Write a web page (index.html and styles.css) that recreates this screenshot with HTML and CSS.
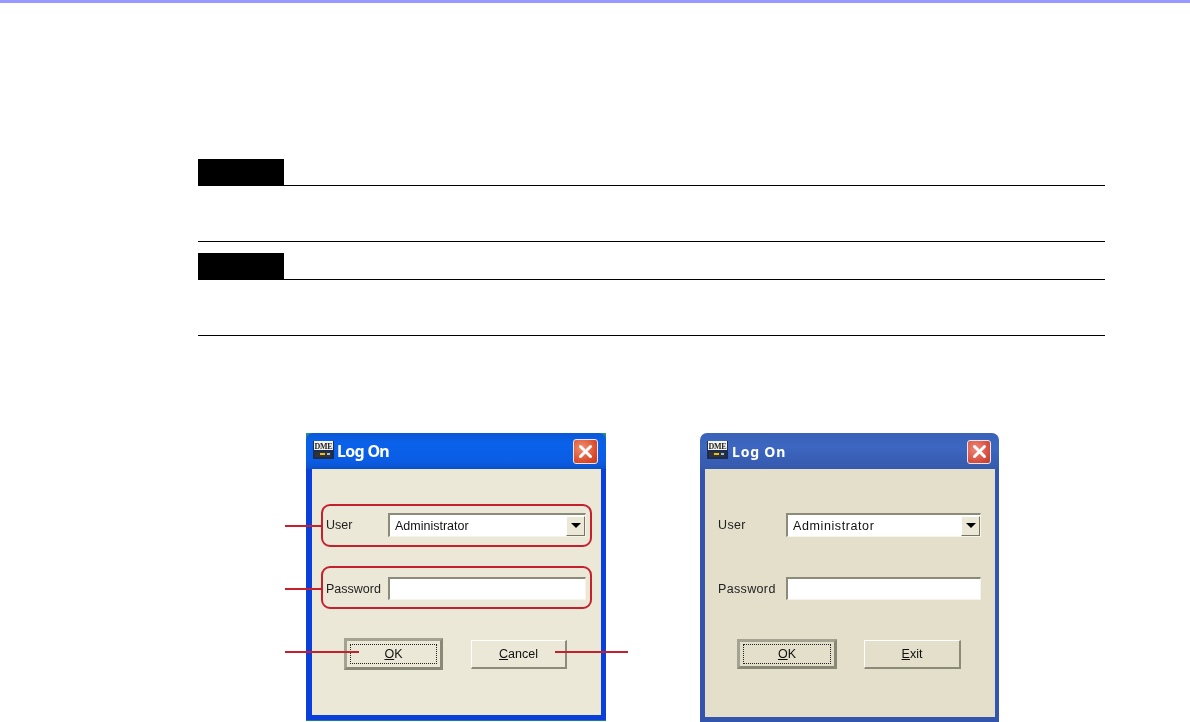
FILE: index.html
```html
<!DOCTYPE html>
<html lang="en">
  <head>
    <title>Log On</title>
    <meta charset="UTF-8" />
    <link rel="stylesheet" href="styles.css">
  </head>
  <body>
    <div class="top-bar"></div>
    <main class="page">
      <section class="note">
        <div class="note-head"><div class="note-tag"></div></div>
        <div class="note-body"></div>
      </section>
      <section class="note">
        <div class="note-head"><div class="note-tag"></div></div>
        <div class="note-body"></div>
      </section>
    </main>

    <div class="figures">
      <!-- left dialog, with callouts -->
      <div class="win win-xp">
        <div class="title-bar">
          <svg class="app-icon" width="21" height="18" viewBox="0 0 21 18">
            <rect width="21" height="18" fill="#1c2c50" />
            <rect x="1" y="0" width="19" height="9" fill="#f4f4f0" />
            <text x="10.5" y="7.5" text-anchor="middle" font-size="8" font-weight="bold" textLength="18" font-family="Liberation Serif" fill="#222">DME</text>
            <rect x="2" y="11" width="16" height="5" fill="#333" />
            <rect x="7" y="12" width="5" height="2" fill="#e8c020" />
            <rect x="14" y="12" width="3" height="2" fill="#9ac0e0" />
          </svg>
          <span class="title-text">Log On</span>
          <div class="close-btn">
            <svg width="15" height="15" viewBox="0 0 15 15"><path d="M2.5 2.5 L12.5 12.5 M12.5 2.5 L2.5 12.5" stroke="#fff" stroke-width="3" stroke-linecap="round" /></svg>
          </div>
        </div>
        <div class="win-body">
          <div class="field">
            <label class="field-label">User</label>
            <div class="combo"><span>Administrator</span><div class="combo-arrow"><i></i></div></div>
          </div>
          <div class="field field-pass">
            <label class="field-label">Password</label>
            <div class="text-input"></div>
          </div>
          <div class="buttons">
            <div class="btn btn-default"><span class="btn-focus"><u>O</u>K</span></div>
            <div class="btn"><span><u>C</u>ancel</span></div>
          </div>
        </div>
        <div class="red-box red-box-user"></div>
        <div class="red-box red-box-pass"></div>
        <div class="callout callout-user"></div>
        <div class="callout callout-pass"></div>
        <div class="callout callout-ok"></div>
        <div class="callout callout-cancel"></div>
      </div>

      <!-- right dialog -->
      <div class="win win-muted">
        <div class="title-bar">
          <svg class="app-icon" width="21" height="18" viewBox="0 0 21 18">
            <rect width="21" height="18" fill="#1c2c50" />
            <rect x="1" y="0" width="19" height="9" fill="#f4f4f0" />
            <text x="10.5" y="7.5" text-anchor="middle" font-size="8" font-weight="bold" textLength="18" font-family="Liberation Serif" fill="#222">DME</text>
            <rect x="2" y="11" width="16" height="5" fill="#333" />
            <rect x="7" y="12" width="5" height="2" fill="#e8c020" />
            <rect x="14" y="12" width="3" height="2" fill="#9ac0e0" />
          </svg>
          <span class="title-text">Log On</span>
          <div class="close-btn">
            <svg width="15" height="15" viewBox="0 0 15 15"><path d="M2.5 2.5 L12.5 12.5 M12.5 2.5 L2.5 12.5" stroke="#fff" stroke-width="3" stroke-linecap="round" /></svg>
          </div>
        </div>
        <div class="win-body">
          <div class="field">
            <label class="field-label">User</label>
            <div class="combo"><span>Administrator</span><div class="combo-arrow"><i></i></div></div>
          </div>
          <div class="field field-pass">
            <label class="field-label">Password</label>
            <div class="text-input"></div>
          </div>
          <div class="buttons">
            <div class="btn btn-default"><span class="btn-focus"><u>O</u>K</span></div>
            <div class="btn"><span><u>E</u>xit</span></div>
          </div>
        </div>
      </div>
    </div>
  </body>
</html>
```

FILE: styles.css
```css
body {
  font-family: "Liberation Sans", Arial, sans-serif;
  margin: 0;
  background: #fff;
  color: #111;
  overflow: hidden;
}
.top-bar {
  height: 3px;
  background: #9999ff;
}
.page {
  width: 907px;
  margin: 156px 0 0 198px;
}
.note {
  margin-bottom: 11px;
  border-bottom: 1px solid #000;
}
.note-head {
  height: 26px;
  border-bottom: 1px solid #000;
}
.note-tag {
  width: 86px;
  height: 27px;
  background: #000;
}
.note-body {
  height: 55px;
}

/* dialogs */
.figures {
  display: flex;
  gap: 94px;
  margin: 97px 0 0 306px;
}
.win {
  position: relative;
  width: 300px;
  height: 288px;
  display: flex;
  flex-direction: column;
  font-size: 12.5px;
}
.win-xp {
  background: linear-gradient(#2a8f8a, #2a8f8a 8px, transparent 8px);
  border-bottom: 1px solid #1f8080;
  box-sizing: border-box;
}
.win-muted {
  width: 299px;
  height: 289px;
}
.title-bar {
  height: 36px;
  display: flex;
  align-items: center;
  flex-shrink: 0;
  padding: 0 8px 0 7px;
  border-radius: 7px 7px 0 0;
  color: #fff;
}
.win-xp .title-bar {
  background: linear-gradient(#0a58d8, #0a62ea 30%, #0b5ce4 80%, #0a50c8);
}
.win-muted .title-bar {
  background: linear-gradient(#3a62b8, #3c66c0 40%, #3559ac);
}
.app-icon {
  margin-top: -2px;
  filter: blur(0.4px);
}
.title-text {
  margin-left: 3px;
  font-family: "Noto Sans", sans-serif;
  font-size: 16px;
  font-weight: 700;
  letter-spacing: -0.7px;
  filter: blur(0.4px);
}
.win-muted .title-text {
  margin-left: 4px;
  font-size: 14px;
  letter-spacing: 0.8px;
}
.close-btn {
  width: 25px;
  height: 25px;
  margin: 1px 0 0 auto;
  box-sizing: border-box;
  border: 1px solid #e8e8e8;
  border-radius: 3px;
  background: radial-gradient(circle at 35% 35%, #f09070, #d8482a 70%, #c03a20);
  display: flex;
  align-items: center;
  justify-content: center;
}
.win-muted .close-btn {
  width: 24px;
  height: 24px;
  background: radial-gradient(circle at 35% 35%, #ee8878, #d44a3c 70%, #bc3a30);
}
.win-body {
  flex: 1;
  padding: 44px 0 0 14px;
  background: #ebe8d8;
  border-style: solid;
  border-width: 0 5px 5px 6px;
  border-color: #0a3fdc;
}
.win-muted .win-body {
  padding-left: 13px;
  background: #e3dfca;
  border-color: #3355ab;
  border-width: 0 4px 5px 5px;
}
.field {
  display: flex;
  align-items: center;
  filter: blur(0.4px);
}
.field-pass {
  margin-top: 40px;
}
.field-label {
  width: 62px;
  color: #222;
}
.win-muted .field-label {
  width: 68px;
  letter-spacing: 0.35px;
}
.combo,
.text-input {
  width: 198px;
  box-sizing: border-box;
  background: #fff;
  border-style: solid;
  border-width: 2px 1px 1px 2px;
  border-color: #8c8a78 #f6f4ea #f6f4ea #8c8a78;
}
.win-muted .combo,
.win-muted .text-input {
  width: 195px;
}
.combo {
  height: 24px;
  display: flex;
  align-items: center;
  justify-content: space-between;
  padding-left: 5px;
}
.win-muted .combo {
  letter-spacing: 0.6px;
}
.text-input {
  height: 23px;
}
.combo-arrow {
  width: 19px;
  height: 20px;
  box-sizing: border-box;
  background: #ebe8d8;
  border-style: solid;
  border-width: 1px;
  border-color: #fff #77745f #77745f #fff;
  display: flex;
  align-items: center;
  justify-content: center;
}
.combo-arrow i {
  width: 0;
  height: 0;
  border-left: 5px solid transparent;
  border-right: 5px solid transparent;
  border-top: 5px solid #000;
}
.buttons {
  display: flex;
  align-items: center;
  gap: 28px;
  margin: 38px 0 0 18px;
  filter: blur(0.4px);
}
.win-muted .buttons {
  gap: 27px;
  margin: 39px 0 0 19px;
}
.btn {
  width: 96px;
  height: 29px;
  box-sizing: border-box;
  display: flex;
  align-items: center;
  justify-content: center;
  color: #111;
  background: #ebe8d8;
  border-style: solid;
  border-width: 1px 2px 2px 1px;
  border-color: #fff #8c8a78 #8c8a78 #fff;
}
.win-muted .btn {
  width: 97px;
  background: #e3dfca;
}
.btn-default {
  width: 99px;
  height: 32px;
  border: 3px solid #8a8876;
  border-top-color: #a4a290;
  border-left-color: #a4a290;
}
.win-muted .btn-default {
  width: 100px;
  height: 30px;
}
.btn-focus {
  align-self: stretch;
  flex: 1;
  margin: 3px 3px;
  display: flex;
  align-items: center;
  justify-content: center;
  border: 1px dotted #222;
}
.win-muted .btn-focus {
  margin: 2px 3px;
}

/* callouts over the left dialog */
.red-box {
  position: absolute;
  left: 15px;
  width: 271px;
  height: 43px;
  box-sizing: border-box;
  border: 2px solid #c4202e;
  border-radius: 9px;
}
.red-box-user {
  top: 71px;
}
.red-box-pass {
  top: 133px;
}
.callout {
  position: absolute;
  left: -21px;
  width: 36px;
  height: 2px;
  background: #c4202e;
}
.callout-user {
  top: 92px;
}
.callout-pass {
  top: 155px;
}
.callout-ok {
  top: 218px;
  width: 74px;
}
.callout-cancel {
  top: 218px;
  left: 249px;
  width: 73px;
}
```
